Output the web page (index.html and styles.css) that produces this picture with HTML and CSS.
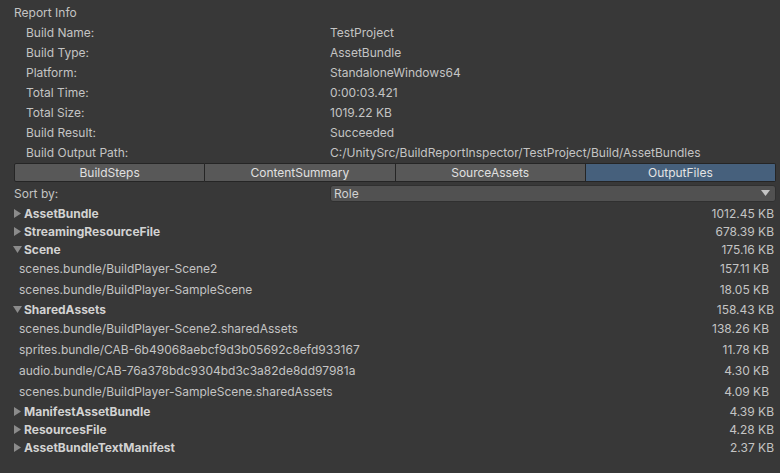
FILE: index.html
```html
<!DOCTYPE html>
<html>
<head>
<meta charset="utf-8">
<link rel="stylesheet" href="styles.css">
</head>
<body>
<div class="panel">
  <div class="title">Report Info</div>
  <div class="info">
    <div class="row"><span class="lbl">Build Name:</span><span class="val">TestProject</span></div>
    <div class="row"><span class="lbl">Build Type:</span><span class="val">AssetBundle</span></div>
    <div class="row"><span class="lbl">Platform:</span><span class="val">StandaloneWindows64</span></div>
    <div class="row"><span class="lbl">Total Time:</span><span class="val">0:00:03.421</span></div>
    <div class="row"><span class="lbl">Total Size:</span><span class="val">1019.22 KB</span></div>
    <div class="row"><span class="lbl">Build Result:</span><span class="val">Succeeded</span></div>
    <div class="row"><span class="lbl">Build Output Path:</span><span class="val">C:/UnitySrc/BuildReportInspector/TestProject/Build/AssetBundles</span></div>
  </div>
  <div class="tabs">
    <div class="tab">BuildSteps</div>
    <div class="tab">ContentSummary</div>
    <div class="tab">SourceAssets</div>
    <div class="tab sel">OutputFiles</div>
  </div>
  <div class="sort">
    <span class="sortlbl">Sort by:</span>
    <div class="dropdown"><span>Role</span><svg class="dd" width="9" height="6" viewBox="0 0 9 6"><path d="M0 0H9L4.5 6Z" fill="#c4c4c4"/></svg></div>
  </div>
  <div class="tree">
    <div class="hdr"><svg class="arr" width="7" height="9" viewBox="0 0 7 9"><path d="M0 0L7 4.5L0 9Z"/></svg><span class="name">AssetBundle</span><span class="size">1012.45 KB</span></div>
    <div class="hdr"><svg class="arr" width="7" height="9" viewBox="0 0 7 9"><path d="M0 0L7 4.5L0 9Z"/></svg><span class="name">StreamingResourceFile</span><span class="size">678.39 KB</span></div>
    <div class="hdr"><svg class="arr" width="9" height="7" viewBox="0 0 9 7"><path d="M0 0H9L4.5 7Z"/></svg><span class="name">Scene</span><span class="size">175.16 KB</span></div>
    <div class="child"><span class="name">scenes.bundle/BuildPlayer-Scene2</span><span class="size">157.11 KB</span></div>
    <div class="child"><span class="name">scenes.bundle/BuildPlayer-SampleScene</span><span class="size">18.05 KB</span></div>
    <div class="hdr"><svg class="arr" width="9" height="7" viewBox="0 0 9 7"><path d="M0 0H9L4.5 7Z"/></svg><span class="name">SharedAssets</span><span class="size">158.43 KB</span></div>
    <div class="child"><span class="name">scenes.bundle/BuildPlayer-Scene2.sharedAssets</span><span class="size">138.26 KB</span></div>
    <div class="child"><span class="name">sprites.bundle/CAB-6b49068aebcf9d3b05692c8efd933167</span><span class="size">11.78 KB</span></div>
    <div class="child"><span class="name">audio.bundle/CAB-76a378bdc9304bd3c3a82de8dd97981a</span><span class="size">4.30 KB</span></div>
    <div class="child"><span class="name">scenes.bundle/BuildPlayer-SampleScene.sharedAssets</span><span class="size">4.09 KB</span></div>
    <div class="hdr"><svg class="arr" width="7" height="9" viewBox="0 0 7 9"><path d="M0 0L7 4.5L0 9Z"/></svg><span class="name">ManifestAssetBundle</span><span class="size">4.39 KB</span></div>
    <div class="hdr"><svg class="arr" width="7" height="9" viewBox="0 0 7 9"><path d="M0 0L7 4.5L0 9Z"/></svg><span class="name">ResourcesFile</span><span class="size">4.28 KB</span></div>
    <div class="hdr"><svg class="arr" width="7" height="9" viewBox="0 0 7 9"><path d="M0 0L7 4.5L0 9Z"/></svg><span class="name">AssetBundleTextManifest</span><span class="size">2.37 KB</span></div>
  </div>
</div>
</body>
</html>
```
FILE: styles.css
```css
html, body {
  margin: 0;
  padding: 0;
  background: #383838;
  width: 780px;
  height: 473px;
  overflow: hidden;
}
body {
  font-family: Inter, "Noto Sans", sans-serif;
  font-size: 12px;
  color: #c4c4c4;
}
.panel {
  padding: 3px 4px 0 14px;
}
.title {
  height: 20px;
  line-height: 20px;
}
.row {
  display: flex;
  height: 20px;
  line-height: 20px;
}
.lbl {
  width: 316px;
  box-sizing: border-box;
  padding-left: 12px;
  flex: none;
}
.val {
  white-space: nowrap;
}
.tabs {
  display: flex;
  height: 19px;
}
.tab {
  flex: 1;
  background: #585858;
  border: 1px solid #252525;
  border-left: none;
  color: #e0e0e0;
  text-align: center;
  line-height: 17px;
  box-sizing: border-box;
}
.tab:first-child {
  border-left: 1px solid #252525;
  border-radius: 2px 0 0 2px;
}
.tab:last-child {
  border-radius: 0 2px 2px 0;
}
.tab.sel {
  background: #46607c;
  color: #e4e4e4;
}
.sort {
  display: flex;
  align-items: center;
  height: 22px;
}
.sortlbl {
  width: 316px;
  flex: none;
}
.dropdown {
  flex: 1;
  height: 17px;
  box-sizing: border-box;
  background: #515151;
  border: 1px solid #303030;
  border-radius: 3px;
  display: flex;
  align-items: center;
  justify-content: space-between;
  padding: 0 5px 0 3px;
  color: #d2d2d2;
}
.dd {
  display: block;
}
.tree {
  margin-left: -14px;
  margin-right: -4px;
}
.hdr {
  display: flex;
  align-items: center;
  height: 18px;
  padding-left: 13px;
  padding-right: 6px;
}
.hdr .name {
  font-weight: 700;
  color: #d2d2d2;
  margin-left: 2px;
}
.arr {
  fill: #8b8b8b;
  flex: none;
  width: 9px;
  display: block;
}
.hdr .size {
  margin-left: auto;
}
.child {
  display: flex;
  align-items: center;
  height: 21px;
  padding-left: 19px;
  padding-right: 11px;
}
.child .size {
  margin-left: auto;
}
```
